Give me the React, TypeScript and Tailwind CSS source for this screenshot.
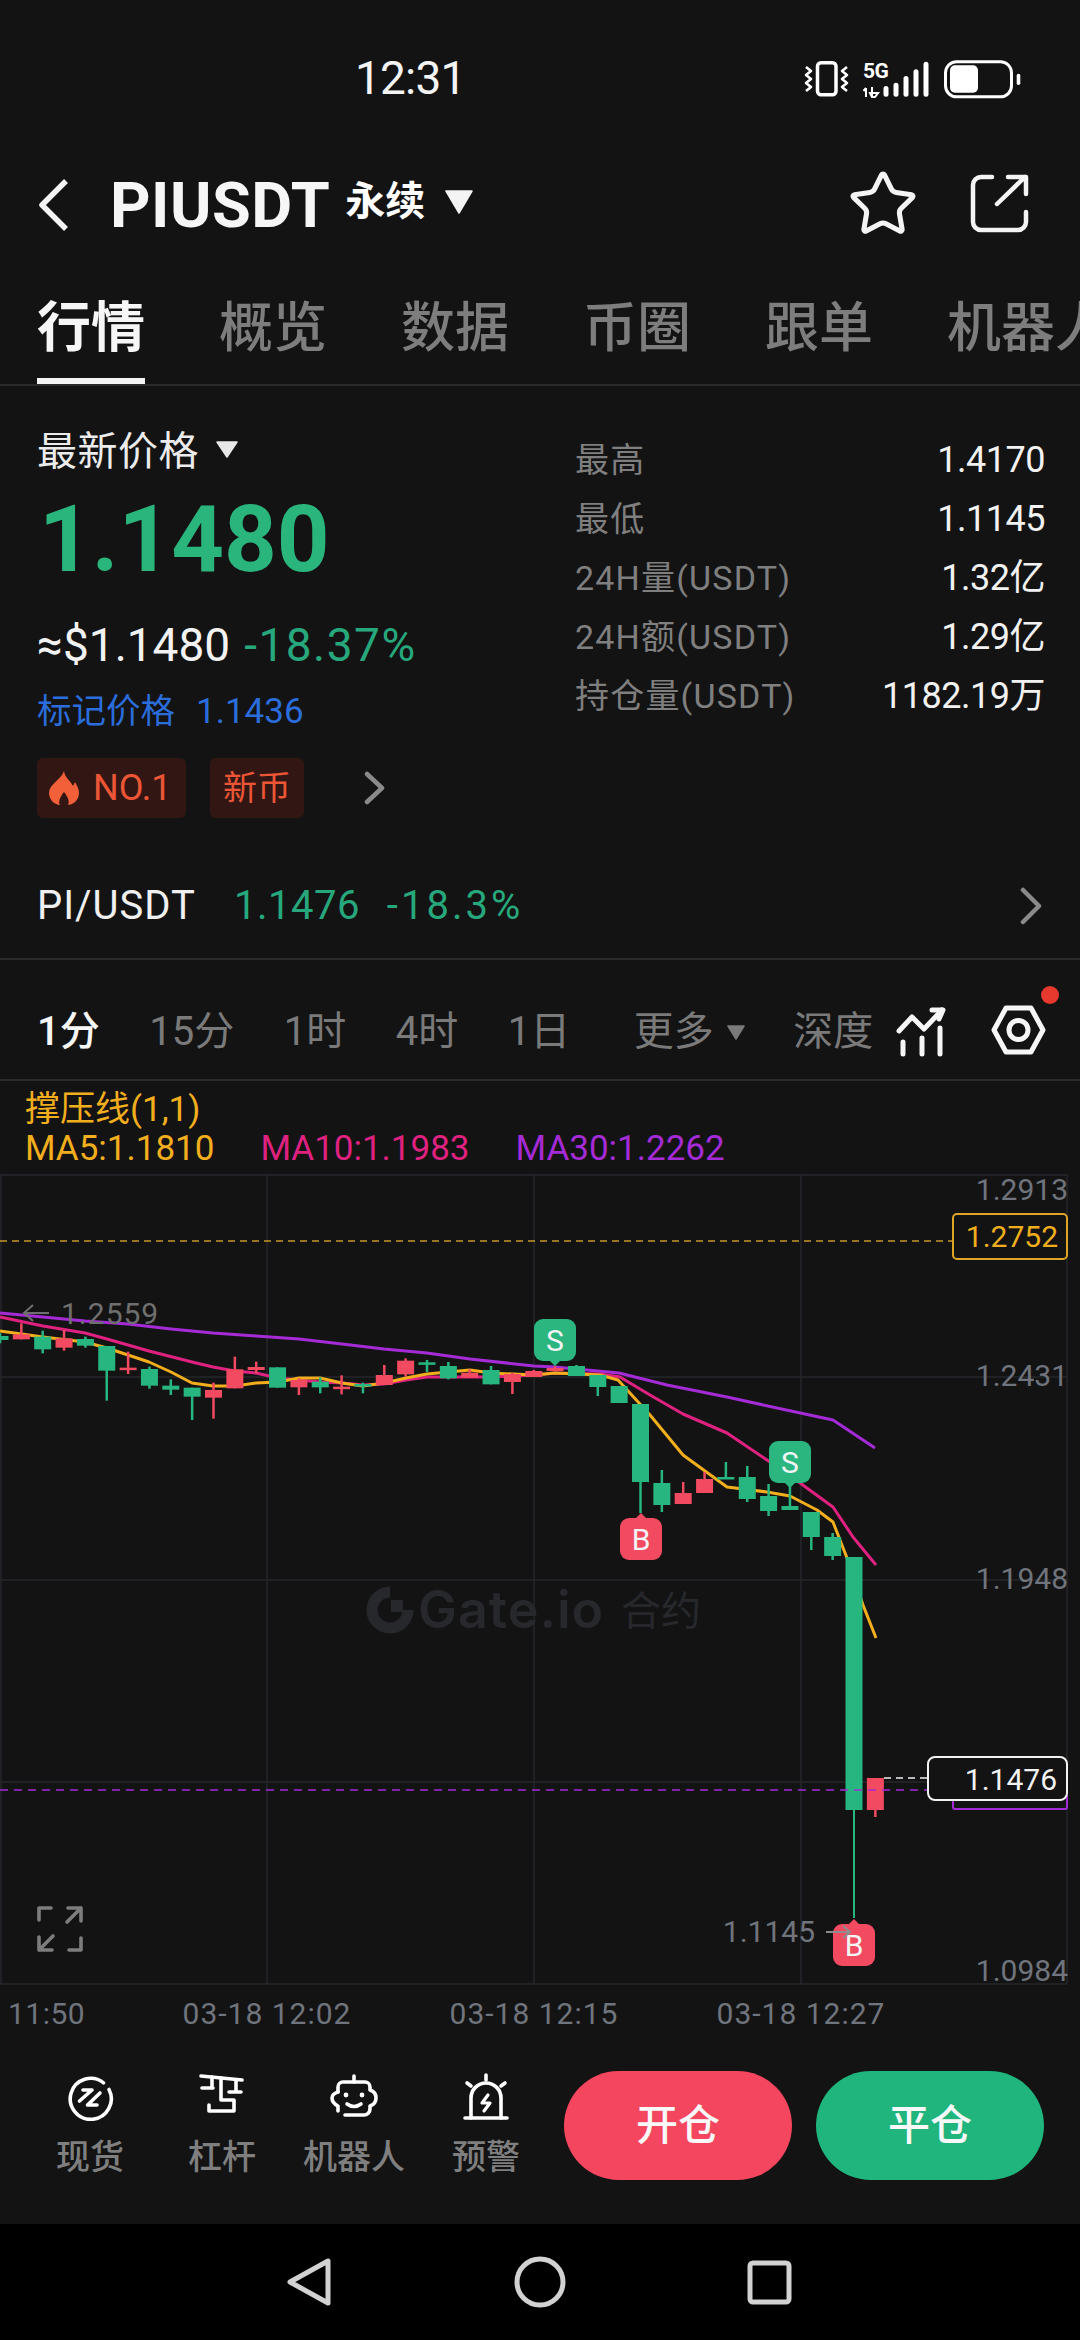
import React from "react";
import { Star } from "lucide-react";

const G = "#27b67f";
const R = "#f24a60";

type C = [number, "g" | "r", number, number, number, number];
const z = (v: number) => 1240 + v / 3;
const first: [number, "g" | "r", number, number, number, number][] = [
  [0, "g", 280, 288, 300, 310],
  [1, "r", 250, 283, 298, 298],
  [2, "g", 272, 290, 328, 340],
  [3, "r", 270, 295, 323, 332],
  [4, "g", 290, 297, 317, 323],
  [5, "g", 318, 318, 392, 482],
  [6, "r", 335, 383, 390, 402],
  [7, "g", 380, 387, 437, 446],
  [8, "g", 418, 437, 449, 465],
  [9, "g", 443, 443, 470, 540],
  [10, "r", 428, 450, 473, 536],
  [11, "r", 350, 388, 445, 445],
  [12, "r", 365, 381, 390, 400],
  [13, "g", 382, 382, 443, 443],
  [14, "r", 415, 420, 442, 465],
  [15, "g", 412, 425, 442, 460],
  [16, "r", 406, 440, 447, 463],
  [17, "g", 428, 432, 436, 460],
  [18, "r", 375, 405, 435, 435],
  [19, "r", 355, 362, 403, 410],
  [20, "g", 360, 367, 374, 396],
  [21, "g", 366, 378, 415, 418],
  [22, "r", 388, 398, 413, 413],
  [23, "g", 378, 390, 433, 433],
];
const candles: C[] = [
  ...first.map(([i, c, h, t, b, l]) => [i, c, z(h), z(t), z(b), z(l)] as C),
  [24, "r", 1373, 1374, 1382, 1394],
  [25, "r", 1370, 1371, 1377, 1377],
  [26, "r", 1366, 1368, 1371, 1371],
  [27, "g", 1365, 1366, 1376, 1376],
  [28, "g", 1375, 1375, 1387, 1396],
  [29, "g", 1386, 1386, 1403, 1403],
  [30, "g", 1404, 1404, 1482, 1513],
  [31, "g", 1470, 1483, 1505, 1512],
  [32, "r", 1482, 1493, 1504, 1504],
  [33, "r", 1472, 1479, 1493, 1493],
  [34, "g", 1462, 1477, 1479, 1479],
  [35, "g", 1466, 1477, 1499, 1502],
  [36, "g", 1484, 1496, 1511, 1516],
  [37, "g", 1483, 1506, 1510, 1510],
  [38, "g", 1512, 1512, 1537, 1550],
  [39, "g", 1533, 1537, 1556, 1560],
  [40, "g", 1557, 1557, 1810, 1918],
  [41, "r", 1778, 1778, 1810, 1817],
];

const ma30 =
  "0,1313 43,1317 85,1321 128,1324 171,1329 213,1333 256,1336 299,1339 342,1344 384,1349 427,1353 470,1359 534,1366 555,1367 619,1373 667,1385 727,1397 777,1408 833,1420 875,1448";
const ma10 =
  "0,1317 43,1326 85,1333 107,1339 149,1351 192,1362 213,1367 235,1371 256,1373 278,1378 299,1380 320,1382 342,1383 363,1385 384,1384 406,1380 427,1377 448,1377 491,1377 534,1375 555,1373 600,1374 620,1377 650,1395 683,1414 727,1433 767,1460 800,1483 833,1507 853,1537 876,1565";
const ma5 =
  "0,1331 43,1337 85,1342 107,1348 149,1362 171,1372 192,1383 213,1386 235,1386 256,1383 278,1382 299,1378 320,1378 342,1383 363,1386 384,1383 406,1378 427,1374 448,1372 470,1370 491,1373 534,1375 555,1373 600,1375 618,1380 650,1415 683,1455 727,1487 767,1492 790,1496 817,1510 833,1522 847,1558 863,1605 876,1638";

function Marker({ x, y, label, color, up }: { x: number; y: number; label: string; color: string; up?: boolean }) {
  const cx = x + 21;
  return (
    <g>
      <rect x={x} y={y} width={42} height={42} rx={9} fill={color} />
      {up ? (
        <polygon points={`${cx - 6},${y + 1} ${cx},${y - 5} ${cx + 6},${y + 1}`} fill={color} />
      ) : (
        <polygon points={`${cx - 6},${y + 41} ${cx},${y + 47} ${cx + 6},${y + 41}`} fill={color} />
      )}
      <text x={cx} y={y + 32} textAnchor="middle" fontSize={30} fill="#f4f4f4">
        {label}
      </text>
    </g>
  );
}

function Chart() {
  const axis = "#70747c";
  const grid = "#26272a";
  return (
    <svg viewBox="0 1175 1080 865" width={1080} height={865} className="block overflow-visible">
      {[1175, 1377, 1580, 1782, 1984].map((y) => (
        <line key={y} x1={0} x2={1067} y1={y} y2={y} stroke={grid} strokeWidth={1.5} />
      ))}
      {[1, 267, 534, 801, 1067].map((x) => (
        <line key={x} x1={x} x2={x} y1={1175} y2={1984} stroke={grid} strokeWidth={1.5} />
      ))}

      <g fill="#27282c">
        <path d="M390 1592 A18 18 0 1 0 408 1610" fill="none" stroke="#27282c" strokeWidth={11} />
        <rect x={391} y={1600} width={12} height={12} />
        <text x={418} y={1628} fontSize={52} fontWeight={600} fontFamily="Inter" letterSpacing={1}>
          Gate.io
        </text>
        <text x={621} y={1625} fontSize={40}>
          合约
        </text>
      </g>

      <line x1={0} x2={952} y1={1241} y2={1241} stroke="#c9962c" strokeWidth={1.5} strokeDasharray="7 5" />
      <rect x={953} y={1214} width={114} height={45} rx={4} fill="#131314" stroke="#e0a526" strokeWidth={2} />
      <text x={1058} y={1247} textAnchor="end" fontSize={30} fill="#f0ae1c">
        1.2752
      </text>

      <polyline points={ma30} fill="none" stroke="#a42bd6" strokeWidth={3} strokeLinejoin="round" />
      <polyline points={ma10} fill="none" stroke="#df2180" strokeWidth={3} strokeLinejoin="round" />
      <polyline points={ma5} fill="none" stroke="#f2ae1c" strokeWidth={3} strokeLinejoin="round" />

      {candles.map(([i, c, h, t, b, l]) => {
        const x = i * 21.35;
        const col = c === "g" ? G : R;
        return (
          <g key={i}>
            <line x1={x} x2={x} y1={h} y2={l} stroke={col} strokeWidth={i === 40 ? 2 : 2.5} />
            <rect x={x - 8.5} y={t} width={17} height={Math.max(b - t, 2.5)} fill={col} />
          </g>
        );
      })}

      <text x={61} y={1324} fontSize={30} fill="#6f6f6f" letterSpacing={1}>
        1.2559
      </text>
      <path d="M49 1313 H24 M33 1305 L24 1313 L33 1321" fill="none" stroke="#6f6f6f" strokeWidth={2} />

      <Marker x={534} y={1319} label="S" color="#2bb680" />
      <Marker x={769} y={1441} label="S" color="#2bb680" />
      <Marker x={620} y={1518} label="B" color={R} up />
      <Marker x={833} y={1924} label="B" color={R} up />

      <text x={815} y={1942} textAnchor="end" fontSize={30} fill={axis}>
        1.1145
      </text>
      <path d="M826 1932 H850 M843 1926 L850 1932 L843 1938" fill="none" stroke="#8d8d8d" strokeWidth={2} />

      <line x1={0} x2={927} y1={1790} y2={1790} stroke="#a42bd6" strokeWidth={1.5} strokeDasharray="8 6" />
      <path d="M953 1800 V1807 a2 2 0 0 0 2 2 H1065 a2 2 0 0 0 2 -2 V1795" fill="none" stroke="#a42bd6" strokeWidth={2} />
      <line x1={884} x2={927} y1={1778} y2={1778} stroke="#f0f0f0" strokeWidth={1.5} strokeDasharray="7 5" />
      <rect x={928} y={1757} width={139} height={43} rx={7} fill="#131314" stroke="#f2f2f2" strokeWidth={2} />
      <text x={1057} y={1790} textAnchor="end" fontSize={30} fill="#f2f2f2">
        1.1476
      </text>

      {[
        ["1.2913", 1200],
        ["1.2431", 1386],
        ["1.1948", 1589],
        ["1.0984", 1981],
      ].map(([t, y]) => (
        <text key={t} x={1068} y={y as number} textAnchor="end" fontSize={30} fill={axis}>
          {t}
        </text>
      ))}

      <text x={8} y={2024} fontSize={30} fill={axis} letterSpacing={0.5}>
        11:50
      </text>
      {[
        ["03-18 12:02", 267],
        ["03-18 12:15", 534],
        ["03-18 12:27", 801],
      ].map(([t, x]) => (
        <text key={t} x={x as number} y={2024} textAnchor="middle" fontSize={30} fill={axis} letterSpacing={1}>
          {t}
        </text>
      ))}

      <g fill="none" stroke="#7d7d7d" strokeWidth={3.6} strokeLinecap="round" strokeLinejoin="round">
        <path d="M39 1920 V1908 H51" />
        <path d="M81 1938 V1950 H69" />
        <path d="M68 1908 H81 V1921 M81 1908 L67 1922" />
        <path d="M39 1937 V1950 H52 M39 1950 L53 1936" />
      </g>
    </svg>
  );
}

function Tri({ w, h, color }: { w: number; h: number; color: string }) {
  return (
    <svg width={w} height={h} viewBox={`0 0 ${w} ${h}`} className="shrink-0">
      <polygon points={`1,1 ${w - 1},1 ${w / 2},${h - 1}`} fill={color} stroke={color} strokeWidth={1.5} strokeLinejoin="round" />
    </svg>
  );
}

function StatusIcons() {
  return (
    <svg width={225} height={45} viewBox="0 0 225 45" fill="#fff">
      <rect x={17.5} y={6.7} width={18.5} height={32} rx={3.5} fill="none" stroke="#fff" strokeWidth={3.5} />
      <g fill="none" stroke="#fff" strokeWidth={2.6} strokeLinejoin="round">
        <path d="M6 11 L11 15 L6 19 L11 23 L6 27 L11 31 L6 35" />
        <path d="M47 11 L42 15 L47 19 L42 23 L47 27 L42 31 L47 35" />
      </g>
      <text x={63} y={22} fontSize={21} fontWeight={700} fontFamily="Roboto" letterSpacing={-0.5}>
        5G
      </text>
      <path d="M66 32 V41 M66 32 L63.5 35 M72 31 V41 M72 41 L70 37 H78 L75 41 Z" fill="none" stroke="#fff" strokeWidth={2} />
      {[
        [83.5, 30],
        [93.5, 26.7],
        [103.5, 20],
        [113.5, 13.3],
        [123.5, 5.7],
      ].map(([x, y]) => (
        <rect key={x} x={x} y={y} width={5} height={40.7 - y} rx={2.5} />
      ))}
      <rect x={145.5} y={5.8} width={66} height={35} rx={11} fill="none" stroke="#fff" strokeWidth={3} />
      <rect x={150} y={9.3} width={28} height={27.4} rx={5} />
      <rect x={216.7} y={17.7} width={3.6} height={11.3} rx={1.8} />
    </svg>
  );
}

function ToolIcon({ kind }: { kind: number }) {
  const p = { fill: "none", stroke: "#fff", strokeWidth: 3.6, strokeLinecap: "round" as const, strokeLinejoin: "round" as const };
  return (
    <svg width={48} height={48} viewBox="0 0 48 48" className="block">
      {kind === 0 && (
        <g {...p}>
          <path d="M37.5 9.8 A20.5 20.5 0 1 0 43 16.5" />
          <path d="M17 17 H26 L13.5 28" />
          <path d="M34 20 L21.5 32 H31" />
        </g>
      )}
      {kind === 1 && (
        <g {...p}>
          <path d="M3 3 L44 7" />
          <path d="M14 4 V15 M4 15 H15" />
          <path d="M38 7 V19 M31 19 H43" />
          <path d="M23 5 V27 H36 V38 H11 V32" />
        </g>
      )}
      {kind === 2 && (
        <g {...p}>
          <path d="M24 3 V9" />
          <path d="M8 19 V14 a5 5 0 0 1 5 -5 H35 a5 5 0 0 1 5 5 V17 q6 2 6 8 q0 6 -6 8 V36 a6 6 0 0 1 -6 6 H15" />
          <path d="M8 19 q-6 2 -6 6 q0 5 6 8 V38" />
          <path d="M17 31 q7 5 14 0" />
          <circle cx={16} cy={22} r={1.4} fill="#fff" strokeWidth={2} />
          <circle cx={32} cy={22} r={1.4} fill="#fff" strokeWidth={2} />
        </g>
      )}
      {kind === 3 && (
        <g {...p}>
          <path d="M3 45 H45" />
          <path d="M9 45 V25 a15 15 0 0 1 30 0 V45" />
          <path d="M24 2 V7 M5 10 L9 13 M43 10 L39 13" />
          <path d="M26 22 L20 30 H28 L22 38" strokeWidth={3.2} />
        </g>
      )}
    </svg>
  );
}

const FONT = "font-['Roboto','Noto_Sans_CJK_SC',sans-serif]";

export default function App() {
  const stats: [string, string][] = [
    ["最高", "1.4170"],
    ["最低", "1.1145"],
    ["24H量(USDT)", "1.32亿"],
    ["24H额(USDT)", "1.29亿"],
    ["持仓量(USDT)", "1182.19万"],
  ];
  return (
    <div className={`${FONT} w-[1080px] h-[2340px] overflow-hidden bg-[#131314] flex flex-col text-white`}>
      {/* status bar */}
      <div className="h-[120px] shrink-0 pt-[36px] flex items-center">
        <span className="ml-[355px] text-[46px] leading-none tracking-[-0.8px] text-[#f4f4f4]">12:31</span>
        <div className="ml-auto mr-[55px] flex">
          <StatusIcons />
        </div>
      </div>

      {/* header */}
      <div className="h-[170px] shrink-0 flex items-center pl-[37px]">
        <svg width={32} height={54} viewBox="0 0 32 54" fill="none" stroke="#f4f4f4" strokeWidth={5.5}>
          <path d="M29 3 L5 27 L29 51" strokeLinejoin="round" />
        </svg>
        <span className="ml-[41px] text-[63px] leading-none font-bold text-[#f6f6f6] tracking-[0.5px]">PIUSDT</span>
        <span className="ml-[15px] text-[40px] leading-none font-bold -mt-[6px]">永续</span>
        <span className="ml-[20px] mt-[-6px] flex">
          <Tri w={28} h={24} color="#f4f4f4" />
        </span>
        <div className="ml-auto flex items-center mr-[50px] mt-[-2px]">
          <Star size={72} strokeWidth={1.7} color="#f4f4f4" />
          <svg width={60} height={60} viewBox="0 0 60 60" fill="none" stroke="#f4f4f4" strokeWidth={4.5} strokeLinecap="round" strokeLinejoin="round" className="ml-[51px]">
            <path d="M22 3 H11 a8 8 0 0 0 -8 8 V48 a8 8 0 0 0 8 8 H48 a8 8 0 0 0 8 -8 V38" />
            <path d="M27 30 L55 3 M38 3 H56 V20" />
          </svg>
        </div>
      </div>

      {/* tabs */}
      <div className="h-[96px] shrink-0 flex gap-[76px] pl-[37px] border-b-2 border-[#2a2b2d] overflow-hidden whitespace-nowrap text-[54px] leading-none font-medium text-[#7d7d7d]">
        <div className="relative h-full pt-[12px] font-bold text-[#f6f6f6]">
          行情
          <div className="absolute left-0 right-0 bottom-0 h-[6px] bg-[#f4f4f4]" />
        </div>
        {["概览", "数据", "币圈", "跟单", "机器人"].map((t) => (
          <div key={t} className="pt-[12px] shrink-0 -ml-[2px]">
            {t}
          </div>
        ))}
      </div>

      {/* market info */}
      <div className="flex h-[482px] shrink-0">
        <div className="w-[575px] pl-[37px] pt-[43px] shrink-0">
          <div className="flex items-center h-[46px] text-[40px] leading-none text-[#ececec]">
            <span className="tracking-[0.5px]">最新价格</span>
            <span className="ml-[17px] -mt-[6px] flex">
              <Tri w={22} h={17} color="#e8e8e8" />
            </span>
          </div>
          <div className="mt-[10px] h-[110px] flex items-center text-[92px] leading-none font-bold text-[#2ab57d] pl-[2px]">1.1480</div>
          <div className="mt-[25px] h-[50px] flex items-center text-[46px] leading-none">
            <span className="text-[#f2f2f2]">≈$1.1480</span>
            <span className="ml-[14px] text-[#27a87c] tracking-[1.5px]">-18.37%</span>
          </div>
          <div className="mt-[19px] h-[44px] flex items-center text-[35px] leading-none text-[#2a6ddb]">
            <span className="text-[34.5px]">标记价格</span>
            <span className="ml-[21px]">1.1436</span>
          </div>
          <div className="mt-[25px] h-[60px] flex items-center text-[36px] leading-none text-[#ec5636]">
            <div className="w-[149px] h-[60px] rounded-[6px] bg-[#321613] flex items-center pl-[12px]">
              <svg width={30} height={34} viewBox="0 0 30 34" fill="#f2603a">
                <path d="M15 0 C16 7 21 9 24 15 L26 11 C29 16 30 19 30 22 C30 29 24 34 19 34 C21 31 19 26 15 21 C11 26 9 31 11 34 C6 34 0 29 0 22 C0 13 12 9 15 0Z" />
              </svg>
              <span className="ml-[14px]">NO.1</span>
            </div>
            <div className="ml-[24px] w-[94px] h-[60px] rounded-[6px] bg-[#321613] flex items-center justify-center text-[34px]">新币</div>
            <svg width={22} height={34} viewBox="0 0 22 34" fill="none" stroke="#8a8a8a" strokeWidth={4.5} strokeLinecap="round" strokeLinejoin="round" className="ml-[60px]">
              <path d="M3 3 L18 17 L3 31" />
            </svg>
          </div>
        </div>
        <div className="flex-1 pr-[35px] pt-[44.5px]">
          {stats.map(([k, v]) => (
            <div key={k} className="h-[59px] flex items-center justify-between text-[34px] leading-none text-[#7f7f7f]">
              <span className="tracking-[1.2px]">{k}</span>
              <span className="text-[36px] text-[#f2f2f2] tracking-[-0.5px]">{v}</span>
            </div>
          ))}
        </div>
      </div>

      {/* spot pair row */}
      <div className="h-[92px] shrink-0 flex items-start pl-[37px] pr-[38px] border-b-2 border-[#2a2b2d] text-[40px] leading-none">
        <div className="h-[76px] flex items-center w-full">
          <span className="text-[#f0f0f0] tracking-[1px]">PI/USDT</span>
          <span className="ml-[38px] text-[#27a87c] tracking-[0.5px]">1.1476</span>
          <span className="ml-[27px] text-[#27a87c] tracking-[3px]">-18.3%</span>
          <svg width={22} height={38} viewBox="0 0 22 38" fill="none" stroke="#8a8a8a" strokeWidth={4.5} strokeLinecap="round" strokeLinejoin="round" className="ml-auto">
            <path d="M3 3 L19 19 L3 35" />
          </svg>
        </div>
      </div>

      {/* intervals */}
      <div className="h-[121px] shrink-0 flex items-center border-b-2 border-[#2a2b2d] text-[40px] leading-none text-[#7a7a7a] whitespace-nowrap">
        <div className="flex items-center pt-[25px] pl-[37px] gap-[49.5px]">
          <span className="font-medium text-[#f6f6f6]">1分</span>
          <span>15分</span>
          <span>1时</span>
          <span>4时</span>
          <span>1日</span>
          <span className="ml-[14px] flex items-center">
            更多
            <span className="ml-[13px] flex">
              <Tri w={18} h={15} color="#7a7a7a" />
            </span>
          </span>
          <span className="-ml-[1px]">深度</span>
        </div>
        <svg width={190} height={90} viewBox="0 0 190 90" fill="none" stroke="#f6f6f6" strokeWidth={5} strokeLinecap="round" strokeLinejoin="round" className="ml-auto mr-[8px] mt-[11px] shrink-0">
          <path d="M17 51 L30 37 L42 49 L60 30" />
          <path d="M50 30 H61 L57 39" />
          <path d="M21 62 V74 M40 58 V74 M58 48 V74" />
          <path d="M112 50 L124 28 H149 L161 50 L149 72 H124 Z" />
          <circle cx={136.5} cy={50} r={9.5} />
          <circle cx={168} cy={15} r={9} fill="#e8392f" stroke="none" />
        </svg>
      </div>

      {/* legend */}
      <div className="h-[94px] shrink-0 pl-[25px] text-[35px] leading-none">
        <div className="h-[42px] pt-[11px] text-[#f2ae1c]">撑压线(1,1)</div>
        <div className="mt-[8px] flex gap-[46px]">
          <span className="text-[#f2ae1c]">MA5:1.1810</span>
          <span className="text-[#df2180]">MA10:1.1983</span>
          <span className="text-[#a42bd6]">MA30:1.2262</span>
        </div>
      </div>

      {/* chart */}
      <div className="h-[865px] shrink-0">
        <Chart />
      </div>

      {/* toolbar */}
      <div className="flex-1 flex pl-[24px]">
        {["现货", "杠杆", "机器人", "预警"].map((t, i) => (
          <div key={t} className="w-[132px] flex flex-col items-center pt-[33px] text-[34px] leading-none font-medium text-[#7f7f7f]">
            <ToolIcon kind={i} />
            <span className="mt-[19px]">{t}</span>
          </div>
        ))}
        <div className="ml-[12px] mt-[31px] w-[228px] h-[109px] rounded-full bg-[#f4465e] flex items-center justify-center text-[42px] font-medium text-[#f8f8f8]">开仓</div>
        <div className="ml-[24px] mt-[31px] w-[228px] h-[109px] rounded-full bg-[#1fb57d] flex items-center justify-center text-[42px] font-medium text-[#f8f8f8]">平仓</div>
      </div>

      {/* android nav */}
      <div className="h-[116px] shrink-0 bg-black flex items-center">
        <svg width={1080} height={116} viewBox="0 2224 1080 116" fill="none" stroke="#d2d2d2" strokeWidth={5} strokeLinejoin="round">
          <path d="M328 2261 V2303 L290 2282 Z" />
          <circle cx={540} cy={2282} r={23} />
          <rect x={750} y={2263} width={39} height={39} rx={3} />
        </svg>
      </div>
    </div>
  );
}
